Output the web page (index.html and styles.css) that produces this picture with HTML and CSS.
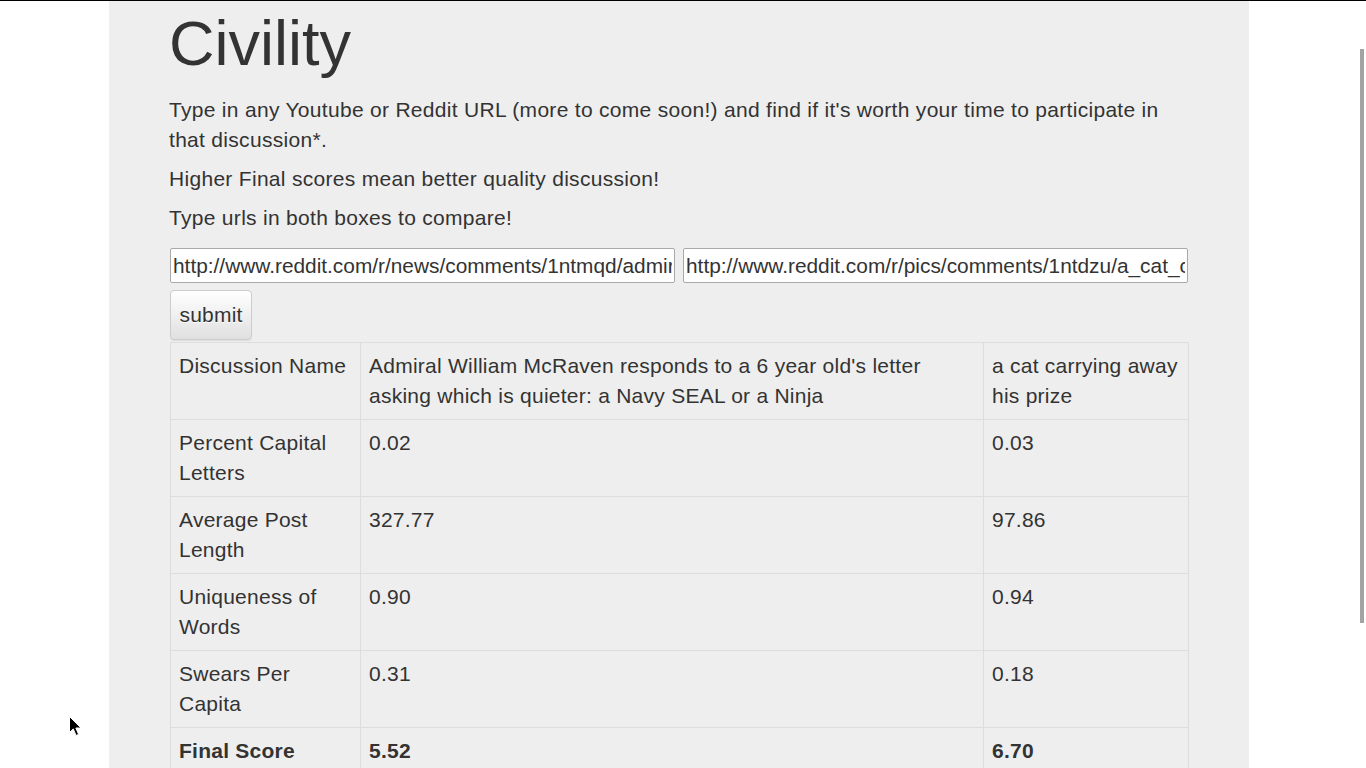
FILE: index.html
```html
<!DOCTYPE html>
<html lang="en">
<head>
<meta charset="utf-8">
<title>Civility</title>
<link rel="stylesheet" href="styles.css">
</head>
<body>
<div class="topline"></div>
<div class="page">
  <div class="jumbotron">
    <h1>Civility</h1>
    <p>Type in any Youtube or Reddit URL (more to come soon!) and find if it's worth your time to participate in that discussion*.</p>
    <p>Higher Final scores mean better quality discussion!</p>
    <p class="last">Type urls in both boxes to compare!</p>
    <form class="url-form">
      <div class="inputs">
        <input type="text" class="url" value="http://www.reddit.com/r/news/comments/1ntmqd/admiral_william_mcraven_responds_to_a_6_year_olds/">
        <input type="text" class="url" value="http://www.reddit.com/r/pics/comments/1ntdzu/a_cat_carrying_away_his_prize/">
      </div>
      <button type="button" class="btn">submit</button>
    </form>
    <table class="results">
      <colgroup>
        <col class="c1">
        <col class="c2">
        <col class="c3">
      </colgroup>
      <tbody>
        <tr>
          <td>Discussion Name</td>
          <td>Admiral William McRaven responds to a 6 year old's letter asking which is quieter: a Navy SEAL or a Ninja</td>
          <td>a cat carrying away his prize</td>
        </tr>
        <tr>
          <td>Percent Capital Letters</td>
          <td>0.02</td>
          <td>0.03</td>
        </tr>
        <tr>
          <td>Average Post Length</td>
          <td>327.77</td>
          <td>97.86</td>
        </tr>
        <tr>
          <td>Uniqueness of Words</td>
          <td>0.90</td>
          <td>0.94</td>
        </tr>
        <tr>
          <td>Swears Per Capita</td>
          <td>0.31</td>
          <td>0.18</td>
        </tr>
        <tr class="final">
          <td>Final Score</td>
          <td>5.52</td>
          <td>6.70</td>
        </tr>
      </tbody>
    </table>
  </div>
</div>
<div class="scroll-thumb"></div>
<svg class="cursor" width="14" height="22" viewBox="0 0 14 22" aria-hidden="true">
  <path d="M0.5 0.5 L0.5 16.5 L4.3 12.9 L7 19.5 L9.6 18.4 L6.9 12 L12 12 Z" fill="#000" stroke="#fff" stroke-width="1" stroke-linejoin="round"/>
</svg>
</body>
</html>
```
FILE: styles.css
```css
html {
  overflow: hidden;
}
body {
  margin: 0;
  background: #fff;
  font-family: "Liberation Sans", Arial, Helvetica, sans-serif;
  color: #333;
}
.topline {
  height: 1px;
  background: #000;
}
.page {
  width: 1358px;
}
.jumbotron {
  width: 1140px;
  box-sizing: border-box;
  margin: 0 auto;
  padding: 8px 60px 48px;
  background: #eee;
  font-size: 21px;
  line-height: 30px;
  letter-spacing: 0.25px;
  min-height: 800px;
}
.jumbotron h1 {
  margin: 0 0 17px;
  font-size: 63px;
  line-height: 1.1;
  font-weight: 500;
  letter-spacing: 0;
  color: #333;
}
.jumbotron p {
  margin: 0 0 9px;
  font-size: 21px;
  line-height: 30px;
  font-weight: 200;
  letter-spacing: 0.3px;
}
.jumbotron p.last {
  margin-bottom: 15px;
}
.url-form {
  margin: 0 0 0 1px;
}
.inputs {
  display: flex;
  gap: 8px;
}
.url {
  width: 505px;
  height: 35px;
  box-sizing: border-box;
  margin: 0;
  padding: 0 2px;
  border: 1px solid #a9a9a9;
  border-radius: 2px;
  background: #fff;
  font-family: "Liberation Sans", Arial, sans-serif;
  font-size: 20.85px;
  letter-spacing: 0;
  color: #333;
}
.btn {
  display: block;
  margin: 7px 0 2px;
  padding: 9px 8.5px;
  border: 1px solid #ccc;
  border-radius: 4px;
  background: linear-gradient(to bottom, #fff 0%, #e0e0e0 100%);
  box-shadow: inset 0 1px 0 rgba(255,255,255,.15), 0 1px 1px rgba(0,0,0,.075);
  text-shadow: 0 1px 0 #fff;
  font-family: "Liberation Sans", Arial, sans-serif;
  font-size: 21px;
  line-height: 30px;
  letter-spacing: 0.2px;
  color: #333;
}
.results {
  width: 1018px;
  margin-left: 1px;
  border-collapse: collapse;
  table-layout: fixed;
  border: 1px solid #ddd;
}
.results col.c1 { width: 190px; }
.results col.c2 { width: 623px; }
.results col.c3 { width: 205px; }
.results td {
  border: 1px solid #ddd;
  padding: 8px;
  vertical-align: top;
  line-height: 30px;
}
.results tr.final td {
  font-weight: bold;
}
.scroll-thumb {
  position: fixed;
  left: 1360px;
  top: 49px;
  width: 4px;
  height: 574px;
  background: #a3a3a3;
}
.cursor {
  position: fixed;
  left: 69px;
  top: 716px;
}
```
